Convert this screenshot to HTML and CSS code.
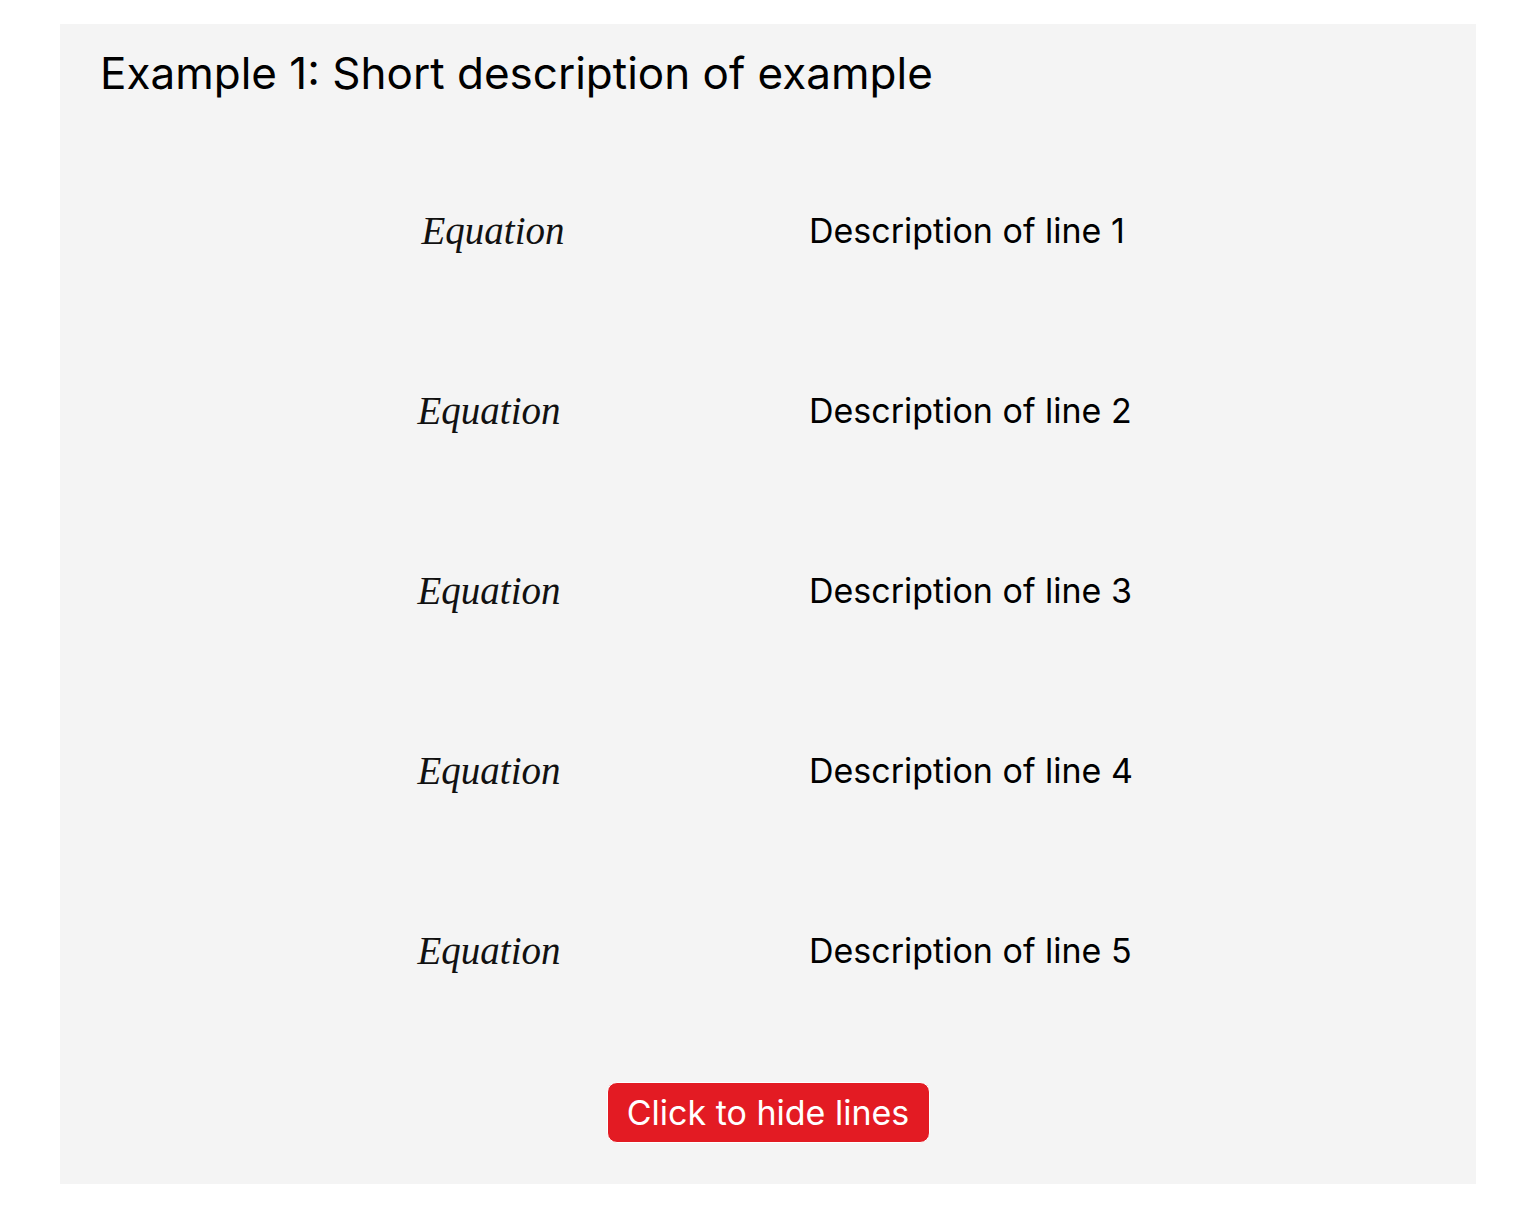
FILE: index.html
```html
<!DOCTYPE html>
<html>
<head>
<meta charset="utf-8">
<link rel="stylesheet" href="styles.css">
</head>
<body>
<div class="example">
  <h1 class="title">Example 1: Short description of example</h1>
  <div class="rows">
    <div class="row"><span class="eq eq-first">Equation</span><span class="desc">Description of line 1</span></div>
    <div class="row"><span class="eq">Equation</span><span class="desc">Description of line 2</span></div>
    <div class="row"><span class="eq">Equation</span><span class="desc">Description of line 3</span></div>
    <div class="row"><span class="eq">Equation</span><span class="desc">Description of line 4</span></div>
    <div class="row"><span class="eq">Equation</span><span class="desc">Description of line 5</span></div>
  </div>
  <div class="actions"><button class="toggle">Click to hide lines</button></div>
</div>
</body>
</html>
```
FILE: styles.css
```css
html, body { margin: 0; padding: 0; background: #ffffff; }
body { padding: 24px 60px 26px 60px; font-family: "Inter", "Liberation Sans", sans-serif; color: #000; }
.example { background: #f4f4f4; height: 1160px; box-sizing: border-box; padding: 0 40px; display: flex; flex-direction: column; }
.title { margin: 0; padding-top: 22px; font-size: 44px; font-weight: 400; line-height: 54px; letter-spacing: 0; }
.rows { margin-top: 40px; display: flex; flex-direction: column; }
.row { height: 180px; display: grid; grid-template-columns: 300px 1fr; align-items: center; margin-left: 239px; }
.eq { font-family: "Liberation Serif", serif; font-style: italic; font-size: 39px; text-align: center; color: #111; }
.eq-first { padding-left: 8px; }
.desc { margin-left: 170px; font-size: 34px; }
.actions { margin-top: 42px; display: flex; justify-content: center; }
.toggle { background: #e31b23; color: #fff; border: 1px solid #fff; border-radius: 10px; font-family: "Inter", "Liberation Sans", sans-serif; font-size: 34px; height: 61px; width: 323px; padding: 0; }
```
